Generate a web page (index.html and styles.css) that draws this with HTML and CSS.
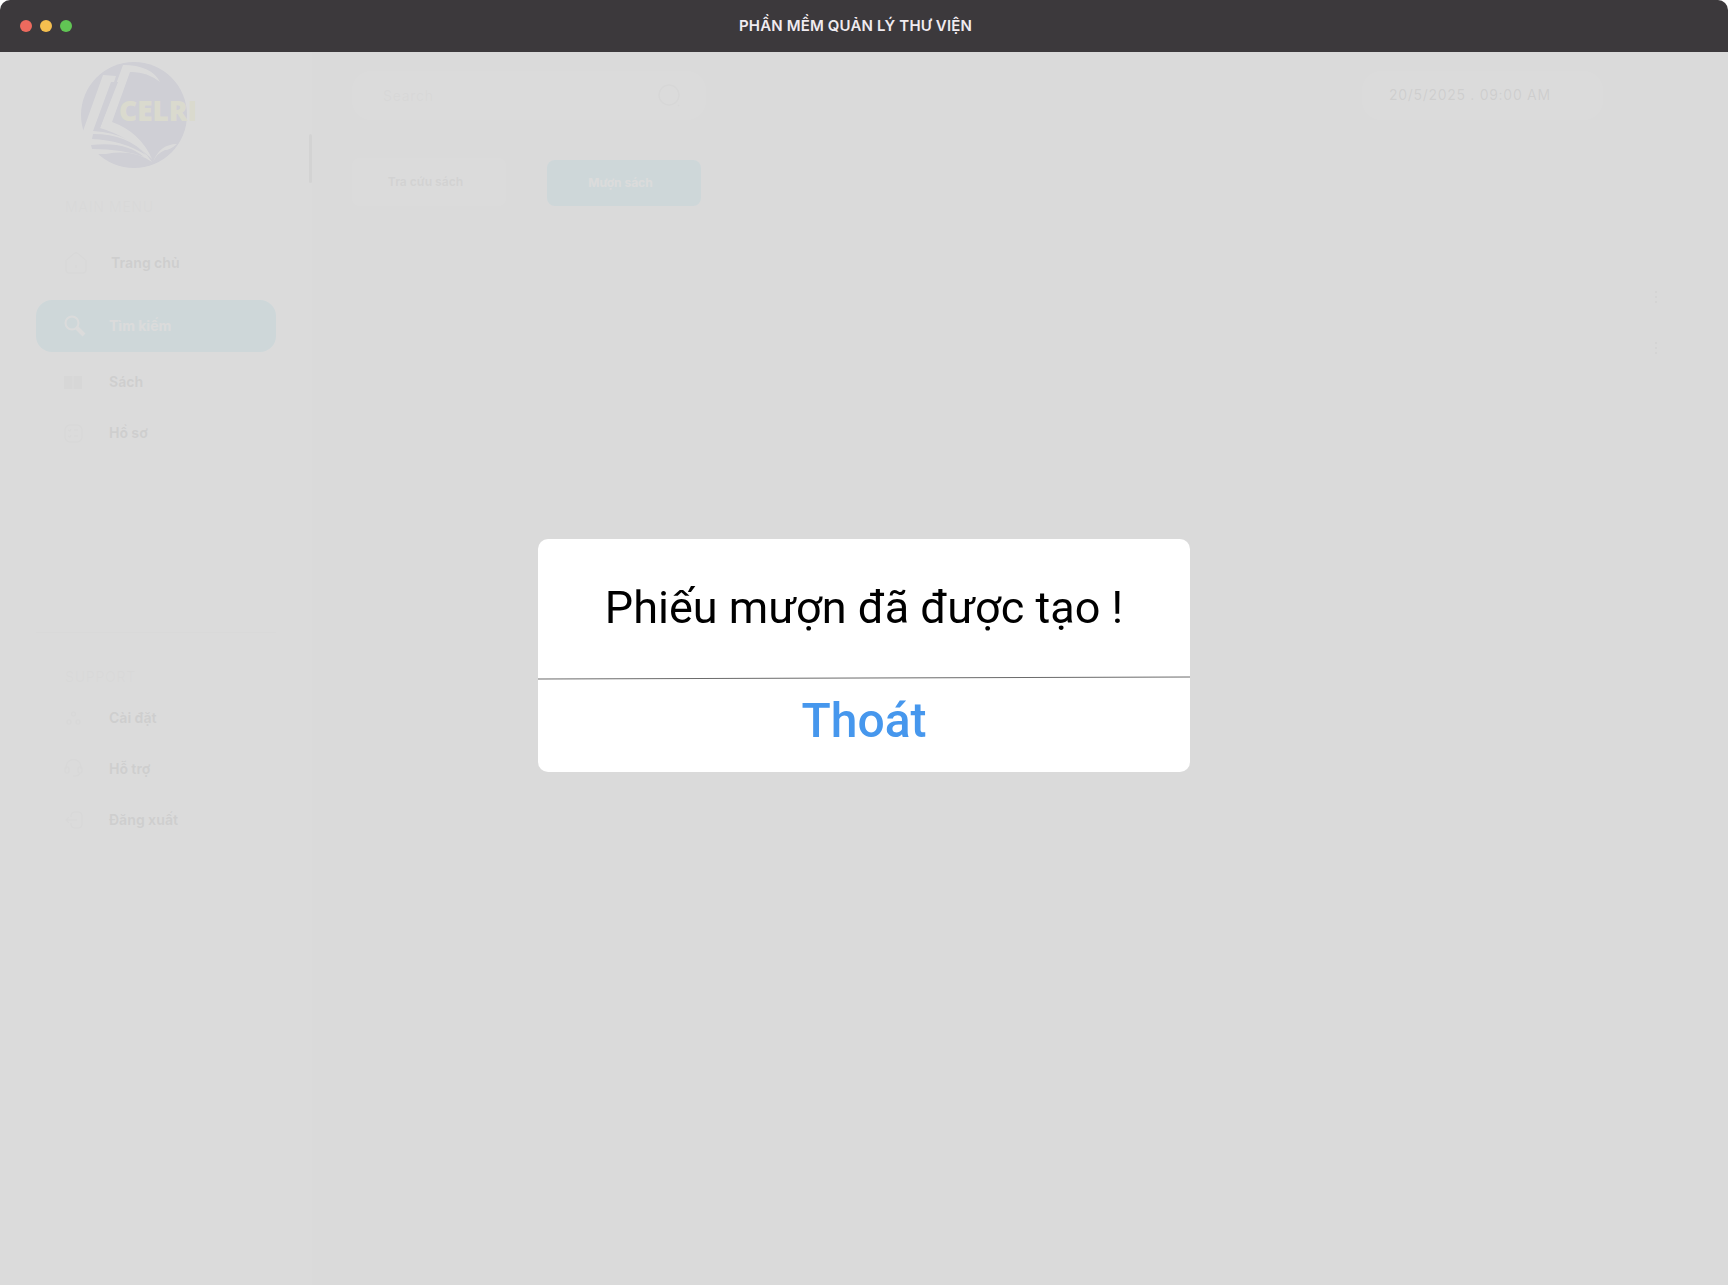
FILE: index.html
```html
<!DOCTYPE html>
<html lang="vi">
<head>
<meta charset="utf-8">
<title>Phần mềm quản lý thư viện</title>
<link rel="stylesheet" href="styles.css">
</head>
<body>
<div class="window">
  <header class="titlebar">
    <div class="lights"><span class="light red"></span><span class="light amber"></span><span class="light green"></span></div>
    <h1 class="title">PHẦN MỀM QUẢN LÝ THƯ VIỆN</h1>
  </header>
  <div class="app">
    <aside class="sidebar">
      <svg class="logo" viewBox="0 0 126 110" role="img" aria-label="CELRI">
        <circle cx="56" cy="54" r="53" fill="#141488"/>
        <path d="M25 14L38 15L36 21L33 21L15 70Q55 72 74 101Q55 88 28 93L6 93L8 84L0 84L5 70Z" fill="#fff"/>
        <path d="M45 4Q73 4 82 21Q68 10 52 11L34 61Q62 71 74 98Q50 75 22 67Z" fill="#fff"/>
        <path d="M26 18L33 21L15 70L10 70ZM15 73Q50 73 68 94Q44 79 14 78ZM13 84Q48 80 66 96Q45 88 14 88Z" fill="#141488" fill-opacity="0"/>
        <path d="M38 21L40 21L22 67L17 66ZM15 73Q50 73 68 94Q44 79 14 78ZM13 84Q48 80 66 96Q45 88 14 88Z" fill="#141488"/>
        <path d="M75 101Q82 83 99 83Q92 89 87 89Q79 92 75 101Z" fill="#fff"/>
        <text class="logo-text" x="41" y="60" fill="#e8e800">CELRI</text>
      </svg>
      <h2 class="group">MAIN MENU</h2>
      <nav class="nav nav-main">
        <a class="item tall home" href="#"><svg class="icon" viewBox="0 0 24 24"><path d="M2 9.500L10 2.500Q12 1 14 2.500L22 9.500V19Q22 22 19 22H5Q2 22 2 19Z"/><path d="M12 14V17"/></svg>Trang chủ</a>
        <a class="item tall active" href="#" aria-current="page"><svg class="icon" viewBox="0 0 24 24"><circle cx="8" cy="9" r="6.500"/><path class="handle" d="M13 14L20 21"/></svg>Tìm kiếm</a>
        <a class="item" href="#"><svg class="icon" viewBox="0 0 24 24"><path class="solid" d="M0 6H8.500V19H0ZM9.500 6H18V19H9.500Z"/></svg>Sách</a>
        <a class="item" href="#"><svg class="icon" viewBox="0 0 24 24"><rect x="1" y="4" width="17" height="17" rx="5"/><path d="M4 9L6 10L7 8M10 9H14M4 15L6 16L7 14M10 15H14"/></svg>Hồ sơ</a>
      </nav>
      <h2 class="group">SUPPORT</h2>
      <nav class="nav">
        <a class="item" href="#"><svg class="icon" viewBox="0 0 24 24"><circle cx="9.500" cy="8" r="2"/><circle cx="5" cy="16" r="2"/><circle cx="14" cy="16" r="2"/></svg>Cài đặt</a>
        <a class="item" href="#"><svg class="icon" viewBox="0 0 24 24"><path d="M2 12V10A7.500 7.500 0 0 1 17 10V12M16 16Q15 19 11 19H9"/><rect x="1" y="10" width="4" height="6" rx="2"/><rect x="14" y="10" width="4" height="6" rx="2"/></svg>Hỗ trợ</a>
        <a class="item" href="#"><svg class="icon" viewBox="0 0 24 24"><path d="M7 9V8Q7 4 11 4H14Q18 4 18 8V16Q18 20 14 20H11Q7 20 7 16V15M13 12H2M5 9L2 12L5 15"/></svg>Đăng xuất</a>
      </nav>
      <span class="scroll-thumb"></span>
    </aside>
    <main class="content">
      <div class="topbar">
        <label class="search"><input class="search-input" type="text" placeholder="Search" aria-label="Search"><svg class="icon" viewBox="0 0 24 24"><circle cx="11" cy="11" r="10"/><path d="M20 21L21 22"/></svg></label>
        <time class="clock">20/5/2025 . 09:00 AM</time>
      </div>
      <div class="tabs">
        <button class="tab" type="button">Tra cứu sách</button>
        <button class="tab current" type="button">Mượn sách</button>
      </div>
      <div class="row-menus">
        <svg class="more" viewBox="0 0 4 14"><circle cx="2" cy="2" r="1"/><circle cx="2" cy="7" r="1"/><circle cx="2" cy="12" r="1"/></svg>
        <svg class="more" viewBox="0 0 4 14"><circle cx="2" cy="2" r="1"/><circle cx="2" cy="7" r="1"/><circle cx="2" cy="12" r="1"/></svg>
      </div>
    </main>
  </div>
  <div class="backdrop">
    <section class="modal" role="dialog" aria-modal="true" aria-labelledby="message">
      <p class="message" id="message">Phiếu mượn đã được tạo !</p>
      <svg class="rule" viewBox="0 0 652 4" preserveAspectRatio="none"><path d="M0 3L652 1"/></svg>
      <button class="close" type="button">Thoát</button>
    </section>
  </div>
</div>
</body>
</html>
```
FILE: styles.css
```css
* { box-sizing: border-box; }
body { margin: 0; background: #fff; font-family: Inter, "Liberation Sans", sans-serif; color: #000; }
h1, h2, p { margin: 0; }
button, input { font: inherit; border: 0; background: none; padding: 0; }
.window { min-height: 100vh; display: flex; flex-direction: column; }

.titlebar { height: 52px; display: flex; align-items: center; padding: 0 89px 0 20px; background: #3c393c; border-radius: 10px 10px 0 0; }
.lights { display: flex; gap: 8px; }
.light { width: 12px; height: 12px; border-radius: 50%; }
.red { background: #ed6a5e; }
.amber { background: #f5bf4f; }
.green { background: #61c554; }
.title { flex: 1; text-align: center; font-size: 15px; line-height: 20px; font-weight: 600; letter-spacing: 0.01em; color: #f0ebf0; }

.app { flex: 1; display: flex; }
.sidebar { position: relative; width: 312px; padding: 9px 36px 0; background: #fff; }
.logo { display: block; width: 126px; height: 110px; margin-left: 42px; overflow: visible; }
.logo-text { font: 800 28px "Open Sans", sans-serif; }
.group { margin: 26px 0 0 29px; font-size: 14px; line-height: 20px; font-weight: 400; letter-spacing: 0.05em; color: #c8c8c8; }
.nav { display: flex; flex-direction: column; padding-top: 5px; }
.nav-main { padding: 20px 0 174px; margin-bottom: 34px; border-bottom: 1px solid #d0d0d0; }
.nav-main + .group { margin-top: 0; }
.item { height: 51px; display: flex; align-items: center; gap: 21px; padding-left: 28px; font-size: 14px; line-height: 20px; font-weight: 700; color: #111; text-decoration: none; border-radius: 16px; }
.tall { height: 52px; }
.home { margin-bottom: 11px; gap: 23px; }
.active { background: #00b2da; color: #fff; margin-bottom: 4px; }
.icon { width: 24px; height: 24px; fill: none; stroke: #c4c4c4; stroke-width: 1.500; flex: none; }
.active .icon { stroke: #fff; stroke-width: 2; }
.active .handle { stroke-width: 4; }
.solid { fill: #aaa; stroke: none; }
.scroll-thumb { position: absolute; right: 0; top: 82px; width: 3px; height: 49px; border-radius: 2px; background: #666; }

.content { flex: 1; background: #e6e6e6; padding: 19px 70px 0 40px; }
.topbar { display: flex; justify-content: space-between; padding-right: 55px; }
.search { width: 354px; height: 49px; display: flex; align-items: center; padding: 0 24px 0 31px; background: #fff; border-radius: 20px; }
.search-input { flex: 1; min-width: 0; font-size: 14px; line-height: 20px; letter-spacing: 0.05em; }
.search-input::placeholder { color: #b0b0b0; opacity: 1; }
.search .icon { stroke: #aaa; }
.clock { width: 241px; height: 49px; padding: 14px 27px; background: #fff; border-radius: 20px; font-size: 14px; line-height: 20px; letter-spacing: 0.05em; }
.tabs { display: flex; align-items: flex-end; gap: 41px; margin-top: 38px; }
.tab { width: 154px; height: 48px; padding-right: 7px; border-radius: 8px; background: #fff; font-size: 12px; line-height: 20px; font-weight: 700; color: #555; }
.current { height: 46px; background: #00b2da; color: #fff; }
.row-menus { display: flex; flex-direction: column; align-items: flex-end; gap: 37px; padding-top: 84px; }
.more { width: 4px; height: 14px; fill: #555; }

.backdrop { position: fixed; inset: 52px 0 0; display: flex; align-items: center; justify-content: center; padding-bottom: 26px; background: rgba(217, 217, 217, .95); }
.modal { width: 652px; max-width: 90%; display: flex; flex-direction: column; background: #fff; border-radius: 10px; overflow: hidden; font-family: Roboto, sans-serif; }
.message { padding: 41px 0 40px; text-align: center; font-size: 45px; line-height: 56px; }
.rule { display: block; width: 100%; height: 4px; fill: none; stroke: #6b6b6b; stroke-width: 1; }
.close { height: 92px; padding-bottom: 10px; color: #4697ed; font-size: 48px; line-height: 56px; font-weight: 500; }
```
